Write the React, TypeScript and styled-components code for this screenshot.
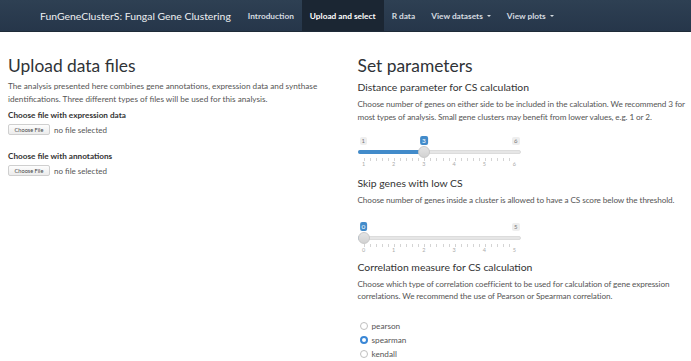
import React from 'react'
import styled, { createGlobalStyle } from 'styled-components'

const GlobalStyle = createGlobalStyle`
  html, body {
    margin: 0;
    padding: 0;
    background: #fff;
  }
  body {
    font-family: Lato, "Open Sans", "Liberation Sans", sans-serif;
    color: #555;
  }
`

const Navbar = styled.div`
  display: flex;
  align-items: stretch;
  height: 32px;
  padding-left: 40px;
  background: linear-gradient(#2e4053, #26364a);
  border-bottom: 1px solid #1f2b38;
  box-sizing: border-box;
`

const Brand = styled.div`
  display: flex;
  align-items: center;
  margin-right: 9px;
  color: #eef0f2;
  font-size: 10.4px;
  white-space: nowrap;
`

const NavItem = styled.div<{ active?: boolean }>`
  display: flex;
  align-items: center;
  gap: 4px;
  padding: 0 8px;
  font-size: 8.3px;
  font-weight: 700;
  color: ${p => (p.active ? '#fff' : '#d6dbe0')};
  background: ${p => (p.active ? '#1b2633' : 'transparent')};
  white-space: nowrap;
`

const Caret = styled.span`
  display: inline-block;
  width: 0;
  height: 0;
  border-left: 2.5px solid transparent;
  border-right: 2.5px solid transparent;
  border-top: 2.5px solid currentColor;
`

const Page = styled.div`
  display: grid;
  grid-template-columns: 1fr 1fr;
  column-gap: 16px;
  padding: 0 0 0 8px;
`

const Column = styled.div`
  display: flex;
  flex-direction: column;
  align-items: flex-start;
  min-width: 0;
`

const Title = styled.h2`
  margin: 23px 0 3px;
  font-size: 17.4px;
  line-height: 22px;
  font-weight: 400;
  color: #2f3337;
`

const SubTitle = styled.h4<{ top?: number }>`
  margin: ${p => p.top ?? 1}px 0 4px;
  font-size: 10.4px;
  line-height: 13px;
  font-weight: 400;
  color: #333;
`

const Text = styled.p<{ tight?: boolean }>`
  margin: 0;
  font-size: 8.2px;
  line-height: 12.6px;
  color: #555;
  white-space: nowrap;
  letter-spacing: ${p => (p.tight ? '-0.1px' : '0')};
`

const Label = styled.div<{ top: number }>`
  margin-top: ${p => p.top}px;
  font-size: 8.2px;
  line-height: 12px;
  font-weight: 700;
  color: #333;
`

const FileRow = styled.div`
  display: flex;
  align-items: center;
  gap: 4px;
  margin-top: 3px;
  font-size: 8px;
  color: #555;
`

const FileButton = styled.button`
  height: 11px;
  width: 42px;
  padding: 0;
  border: 1px solid #cfcfcf;
  border-radius: 2px;
  background: linear-gradient(#fdfdfd, #ececec);
  font-family: inherit;
  font-size: 5.6px;
  color: #444;
`

const SliderBox = styled.div<{ top: number }>`
  position: relative;
  width: 163px;
  margin-top: ${p => p.top}px;
`

const EndLabels = styled.div`
  display: flex;
  justify-content: space-between;
  padding: 0 1px 0 2px;
  height: 8px;
`

const EndLabel = styled.span`
  padding: 0 2px;
  border-radius: 2px;
  background: #eeeeee;
  color: #777;
  font-size: 6px;
  line-height: 8px;
`

const ValueLabel = styled.span`
  position: absolute;
  top: -1px;
  transform: translateX(-50%);
  padding: 0 2px;
  border-radius: 2px;
  background: #428bca;
  color: #fff;
  font-size: 6.5px;
  line-height: 9px;
`

const TrackRow = styled.div`
  position: relative;
  height: 12px;
  margin-top: 1px;
`

const Track = styled.div`
  position: absolute;
  left: 0;
  right: 0;
  top: 4px;
  height: 4px;
  border-radius: 2px;
  background: #e6e6e6;
  border: 1px solid #dcdcdc;
  box-sizing: border-box;
`

const Fill = styled.div`
  position: absolute;
  left: 0;
  top: 4px;
  height: 4px;
  border-radius: 2px 0 0 2px;
  background: #428bca;
`

const Handle = styled.div`
  position: absolute;
  top: 0;
  width: 12px;
  height: 12px;
  margin-left: -6px;
  border-radius: 50%;
  border: 1px solid #c8c8c8;
  background: linear-gradient(#e4e4e4, #d2d2d2);
  box-sizing: border-box;
`

const Ticks = styled.div`
  margin: 0 6px;
  height: 3px;
  background-image: repeating-linear-gradient(
    to right,
    #d4d4d4 0 1px,
    transparent 1px 6.04px
  );
`

const Numbers = styled.div`
  display: flex;
  justify-content: space-between;
  margin: 0 6px;
  height: 7px;
`

const Num = styled.span`
  width: 0;
  display: flex;
  justify-content: center;
  color: #aaa;
  font-size: 5.5px;
  line-height: 7px;
`

const Radios = styled.div`
  display: flex;
  flex-direction: column;
  gap: 3.8px;
  margin-top: 18px;
`

const RadioRow = styled.label`
  display: flex;
  align-items: center;
  gap: 4px;
  font-size: 8.2px;
  line-height: 10px;
  color: #555;
`

const RadioDot = styled.span<{ checked?: boolean }>`
  width: 8px;
  height: 8px;
  border-radius: 50%;
  box-sizing: border-box;
  margin-left: 2px;
  border: ${p => (p.checked ? '2.5px solid #3a87d6' : '1px solid #bfbfbf')};
  background: #fff;
`

type SliderProps = { min: number; max: number; value: number; top: number }

function Slider({ min, max, value, top }: SliderProps) {
  const travel = 151
  const pos = 6 + ((value - min) / (max - min)) * travel
  const nums: number[] = []
  for (let i = min; i <= max; i++) nums.push(i)
  return (
    <SliderBox top={top}>
      <EndLabels>
        <EndLabel style={{ visibility: value === min ? 'hidden' : 'visible' }}>{min}</EndLabel>
        <EndLabel>{max}</EndLabel>
      </EndLabels>
      <ValueLabel style={{ left: pos }}>{value}</ValueLabel>
      <TrackRow>
        <Track />
        <Fill style={{ width: pos }} />
        <Handle style={{ left: pos }} />
      </TrackRow>
      <Ticks />
      <Numbers>
        {nums.map(n => (
          <Num key={n}>{n}</Num>
        ))}
      </Numbers>
    </SliderBox>
  )
}

const App: React.FC = () => {
  return (
    <>
      <GlobalStyle />
      <Navbar>
        <Brand>FunGeneClusterS: Fungal Gene Clustering</Brand>
        <NavItem>Introduction</NavItem>
        <NavItem active>Upload and select</NavItem>
        <NavItem>R data</NavItem>
        <NavItem>
          View datasets <Caret />
        </NavItem>
        <NavItem>
          View plots <Caret />
        </NavItem>
      </Navbar>
      <Page>
        <Column>
          <Title>Upload data files</Title>
          <Text>
            The analysis presented here combines gene annotations, expression data and synthase
            <br />
            identifications. Three different types of files will be used for this analysis.
          </Text>
          <Label top={4}>Choose file with expression data</Label>
          <FileRow>
            <FileButton>Choose File</FileButton>
            no file selected
          </FileRow>
          <Label top={15}>Choose file with annotations</Label>
          <FileRow>
            <FileButton>Choose File</FileButton>
            no file selected
          </FileRow>
        </Column>
        <Column>
          <Title>Set parameters</Title>
          <SubTitle>Distance parameter for CS calculation</SubTitle>
          <Text tight>
            Choose number of genes on either side to be included in the calculation. We recommend 3 for
            <br />
            most types of analysis. Small gene clusters may benefit from lower values, e.g. 1 or 2.
          </Text>
          <Slider min={1} max={6} value={3} top={14} />
          <SubTitle top={9}>Skip genes with low CS</SubTitle>
          <Text tight>Choose number of genes inside a cluster is allowed to have a CS score below the threshold.</Text>
          <Slider min={0} max={5} value={0} top={16} />
          <SubTitle top={7}>Correlation measure for CS calculation</SubTitle>
          <Text tight>
            Choose which type of correlation coefficient to be used for calculation of gene expression
            <br />
            correlations. We recommend the use of Pearson or Spearman correlation.
          </Text>
          <Radios>
            <RadioRow>
              <RadioDot />
              pearson
            </RadioRow>
            <RadioRow>
              <RadioDot checked />
              spearman
            </RadioRow>
            <RadioRow>
              <RadioDot />
              kendall
            </RadioRow>
          </Radios>
        </Column>
      </Page>
    </>
  )
}

export default App
